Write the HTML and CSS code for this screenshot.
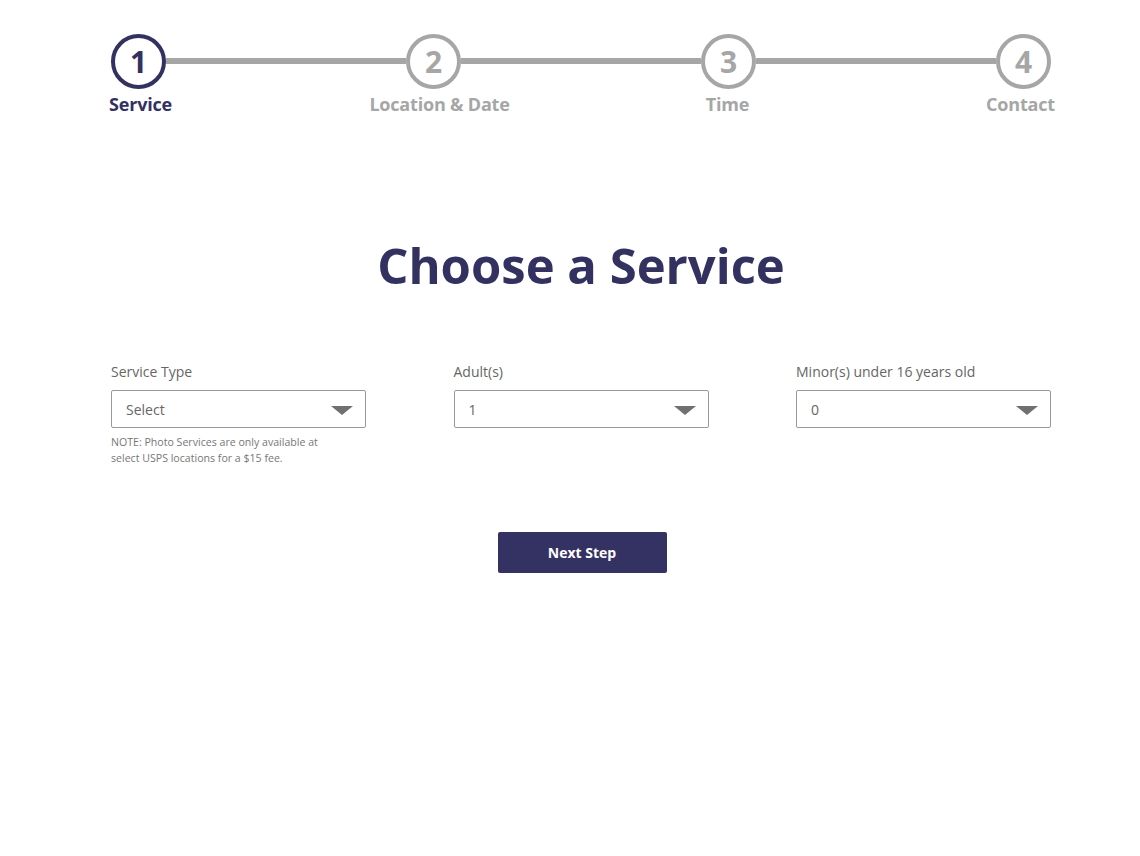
FILE: index.html
```html
<!DOCTYPE html>
<html lang="en">
<head>
<meta charset="utf-8">
<title>Choose a Service</title>
<link rel="stylesheet" href="styles.css">
</head>
<body>
<div class="page">
  <nav class="stepper">
    <div class="step active"><div class="circle">1</div><div class="step-label s1">Service</div></div>
    <div class="bar"></div>
    <div class="step"><div class="circle">2</div><div class="step-label s2">Location &amp; Date</div></div>
    <div class="bar"></div>
    <div class="step"><div class="circle">3</div><div class="step-label s3">Time</div></div>
    <div class="bar"></div>
    <div class="step"><div class="circle">4</div><div class="step-label s4">Contact</div></div>
  </nav>

  <h1 class="title">Choose a Service</h1>

  <div class="fields">
    <div class="field">
      <label class="field-label">Service Type</label>
      <div class="select"><span class="value">Select</span><span class="arrow"></span></div>
      <p class="note">NOTE: Photo Services are only available at<br>select USPS locations for a $15 fee.</p>
    </div>
    <div class="field">
      <label class="field-label">Adult(s)</label>
      <div class="select"><span class="value">1</span><span class="arrow"></span></div>
    </div>
    <div class="field">
      <label class="field-label">Minor(s) under 16 years old</label>
      <div class="select"><span class="value">0</span><span class="arrow"></span></div>
    </div>
  </div>

  <div class="actions">
    <button class="next">Next Step</button>
  </div>
</div>
</body>
</html>
```

FILE: styles.css
```css
* { box-sizing: border-box; }
html, body { margin: 0; padding: 0; background: #fff; }
body { font-family: "Open Sans", "Noto Sans", sans-serif; color: #666; }

.page {
  width: 940px;
  margin-left: 111px;
  padding-top: 34px;
}

.stepper {
  display: flex;
  align-items: flex-start;
}
.step {
  width: 55px;
  flex: none;
  display: flex;
  flex-direction: column;
  align-items: center;
}
.circle {
  width: 55px;
  height: 55px;
  border: 4px solid #a6a6a6;
  border-radius: 50%;
  display: flex;
  align-items: center;
  justify-content: center;
  font-size: 30px;
  font-weight: 700;
  color: #a6a6a6;
  line-height: 1;
  background: #fff;
}
.step-label {
  margin-top: 3px;
  font-size: 18px;
  font-weight: 700;
  color: #a6a6a6;
  white-space: nowrap;
  line-height: 24px;
  letter-spacing: -0.2px;
}
.step-label.s1 { margin-left: 4px; }
.step-label.s2 { margin-left: 12px; }
.step-label.s3 { margin-right: 2px; }
.step-label.s4 { margin-right: 6px; }
.step.active .circle { border-color: #33315f; color: #33315f; }
.step.active .step-label { color: #33315f; }
.bar {
  flex: 1;
  height: 6px;
  background: #a6a6a6;
  margin-top: 24px;
}

.title {
  margin: 116px 0 0;
  text-align: center;
  font-size: 49px;
  font-weight: 700;
  color: #33315f;
  line-height: 66px;
}

.fields {
  margin-top: 64px;
  display: grid;
  grid-template-columns: repeat(3, 255px);
  justify-content: space-between;
}
.field-label {
  display: block;
  font-size: 14px;
  line-height: 20px;
  color: #666;
  margin-bottom: 8px;
}
.select {
  height: 38px;
  border: 1px solid #999;
  border-radius: 2px;
  display: flex;
  align-items: center;
  justify-content: space-between;
  padding: 0 12px 0 14px;
}
.value { font-size: 14px; color: #666; }
.arrow {
  width: 0; height: 0;
  border-left: 11px solid transparent;
  border-right: 11px solid transparent;
  border-top: 9px solid #707070;
  margin-top: 2px;
}
.note {
  margin: 6px 0 0;
  font-size: 10.6px;
  line-height: 16px;
  color: #777;
}

.actions {
  margin-top: 66px;
  display: flex;
  justify-content: center;
}
.next {
  width: 169px;
  height: 41px;
  margin-left: 2px;
  border: none;
  border-radius: 2px;
  background: #343262;
  color: #fff;
  font-family: inherit;
  font-size: 14px;
  font-weight: 700;
}
```
